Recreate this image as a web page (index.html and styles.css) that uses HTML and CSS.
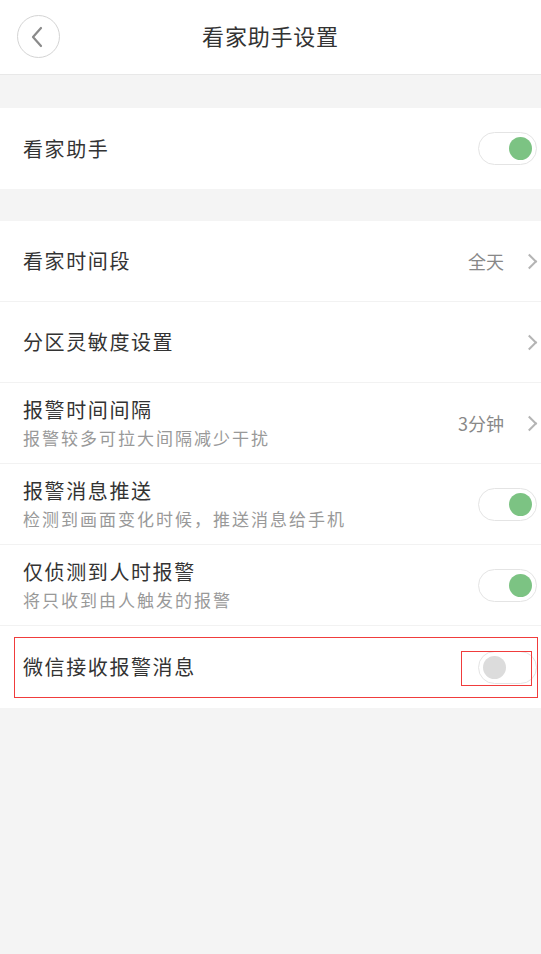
FILE: index.html
```html
<!DOCTYPE html>
<html lang="zh-CN">
  <head>
    <meta charset="UTF-8" />
    <meta name="viewport" content="width=device-width, initial-scale=1.0" />
    <title>看家助手设置</title>
    <link rel="stylesheet" href="styles.css">
  </head>
  <body>
    <div class="header">
      <button class="back">
        <svg width="14" height="22" viewBox="0 0 14 22">
          <path d="M11 2 L3 11 L11 20" fill="none" stroke="#8a8a8a" stroke-width="2.2" stroke-linecap="round" stroke-linejoin="round"/>
        </svg>
      </button>
      <h1 class="title">看家助手设置</h1>
    </div>

    <div class="group">
      <div class="row">
        <div class="label"><div class="name">看家助手</div></div>
        <span class="switch on"></span>
      </div>
    </div>

    <div class="group">
      <div class="row">
        <div class="label"><div class="name">看家时间段</div></div>
        <span class="value">全天</span>
        <span class="chev"></span>
      </div>
      <div class="row">
        <div class="label"><div class="name">分区灵敏度设置</div></div>
        <span class="chev"></span>
      </div>
      <div class="row">
        <div class="label">
          <div class="name">报警时间间隔</div>
          <div class="desc">报警较多可拉大间隔减少干扰</div>
        </div>
        <span class="value">3分钟</span>
        <span class="chev"></span>
      </div>
      <div class="row">
        <div class="label">
          <div class="name">报警消息推送</div>
          <div class="desc">检测到画面变化时候，推送消息给手机</div>
        </div>
        <span class="switch on"></span>
      </div>
      <div class="row">
        <div class="label">
          <div class="name">仅侦测到人时报警</div>
          <div class="desc">将只收到由人触发的报警</div>
        </div>
        <span class="switch on"></span>
      </div>
      <div class="row last">
        <div class="label"><div class="name">微信接收报警消息</div></div>
        <span class="switch"></span>
        <span class="mark mark-row"></span>
        <span class="mark mark-switch"></span>
      </div>
    </div>
  </body>
</html>
```

FILE: styles.css
```css
body {
  margin: 0;
  background-color: #f4f4f4;
  font-family: "Noto Sans CJK SC", "Noto Sans", sans-serif;
  color: #333;
}
.header {
  position: relative;
  height: 75px;
  box-sizing: border-box;
  padding-bottom: 5px;
  background-color: #fff;
  border-bottom: 1px solid #e8e8e8;
  display: flex;
  align-items: center;
  justify-content: center;
}
.back {
  position: absolute;
  left: 17px;
  top: 15px;
  width: 43px;
  height: 43px;
  border: 1px solid #d4d4d4;
  border-radius: 50%;
  background: #fff;
  padding: 0;
  display: flex;
  align-items: center;
  justify-content: center;
}
.back svg {
  margin-left: -3px;
}
.title {
  margin: 0;
  font-size: 22px;
  font-weight: normal;
  letter-spacing: 0.8px;
  color: #333;
}
.group {
  background-color: #fff;
  margin-top: 32px;
}
.header + .group {
  margin-top: 33px;
}
.row {
  position: relative;
  display: flex;
  align-items: center;
  height: 80px;
  padding: 0 4px 0 23px;
  border-bottom: 1px solid #f2f2f2;
}
.group .row:last-child {
  border-bottom: none;
  height: 81px;
}
.group .row.last {
  height: 82px;
}
.label {
  flex: 1;
}
.name {
  font-size: 20px;
  letter-spacing: 1.6px;
  line-height: 28px;
  color: #333;
}
.desc {
  margin-top: 2px;
  font-size: 17px;
  letter-spacing: 2px;
  line-height: 24px;
  color: #999;
}
.value {
  font-size: 18px;
  color: #888;
  margin-right: 20px;
}
.chev {
  width: 9px;
  height: 9px;
  border-top: 2px solid #b4b4b4;
  border-right: 2px solid #b4b4b4;
  transform: rotate(45deg);
  margin-right: 2px;
}
.switch {
  position: relative;
  width: 57px;
  height: 31px;
  border: 1px solid #e4e4e4;
  border-radius: 17px;
  background: #fff;
}
.switch::after {
  content: "";
  position: absolute;
  top: 4px;
  left: 4px;
  width: 23px;
  height: 23px;
  border-radius: 50%;
  background-color: #dcdcdc;
}
.switch.on::after {
  left: auto;
  right: 4px;
  background-color: #7cc383;
}
.mark {
  position: absolute;
  border: 1px solid #f03c3c;
}
.mark-row {
  left: 14px;
  top: 11px;
  width: 522px;
  height: 59px;
}
.mark-switch {
  left: 461px;
  top: 25px;
  width: 69px;
  height: 33px;
}
```
